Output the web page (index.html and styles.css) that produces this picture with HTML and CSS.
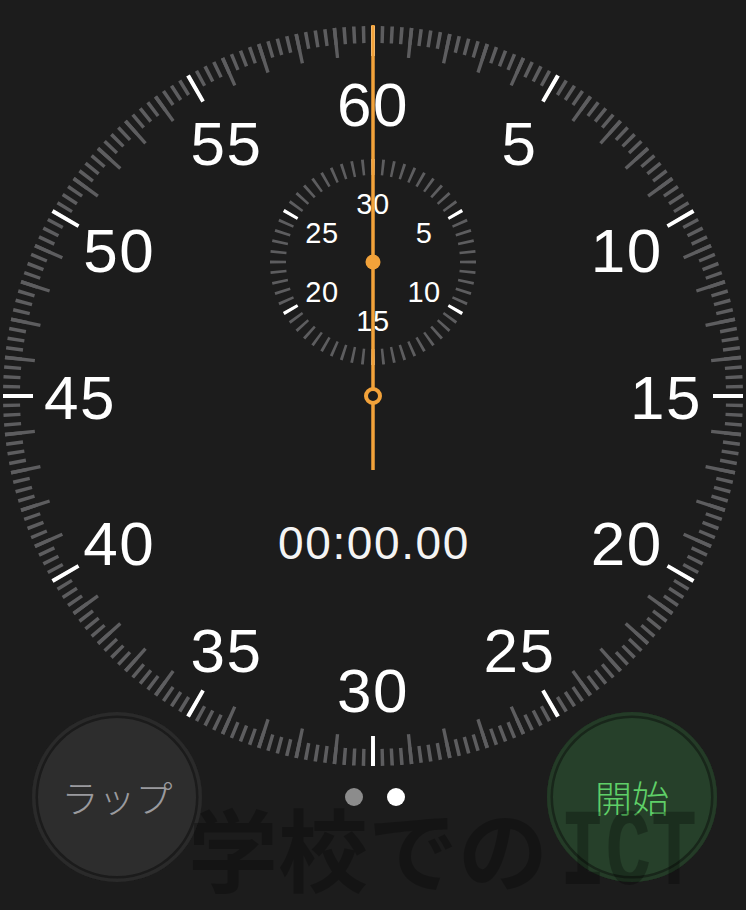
FILE: index.html
```html
<!DOCTYPE html>
<html lang="ja">
<head>
<meta charset="utf-8">
<title>ストップウォッチ</title>
<link rel="stylesheet" href="styles.css">
</head>
<body>
<div class="screen">
  <svg class="dial" viewBox="0 0 746 712" width="746" height="712">
    <g class="main-ticks" transform="rotate(-90 373 396)">
      <circle class="tick-ring minor" cx="373" cy="396" r="361.5" pathLength="240"/>
      <circle class="tick-ring second" cx="373" cy="396" r="355" pathLength="60"/>
      <circle class="tick-ring major" cx="373" cy="396" r="355" pathLength="12"/>
    </g>
    <g class="main-nums">
      <text class="num" x="373" y="104">60</text>
      <text class="num" x="519.5" y="143">5</text>
      <text class="num" x="626.7" y="250">10</text>
      <text class="num" x="666" y="397">15</text>
      <text class="num" x="626.7" y="543">20</text>
      <text class="num" x="519.5" y="650">25</text>
      <text class="num" x="373" y="690">30</text>
      <text class="num" x="226.5" y="650">35</text>
      <text class="num" x="119.3" y="543">40</text>
      <text class="num" x="80" y="397">45</text>
      <text class="num" x="119.3" y="250">50</text>
      <text class="num" x="226.5" y="143">55</text>
    </g>
    <g class="sub-ticks" transform="rotate(-90 373 262)">
      <circle class="tick-ring sub-minor" cx="373" cy="262" r="95" pathLength="60"/>
      <circle class="tick-ring sub-major" cx="373" cy="262" r="95" pathLength="6"/>
    </g>
    <g class="sub-nums">
      <text class="sub-num" x="373" y="204">30</text>
      <text class="sub-num" x="424.1" y="233">5</text>
      <text class="sub-num" x="424.1" y="292">10</text>
      <text class="sub-num" x="373" y="321">15</text>
      <text class="sub-num" x="321.9" y="292">20</text>
      <text class="sub-num" x="321.9" y="233">25</text>
    </g>
    <text class="time" x="374" y="543">00:00.00</text>
    <g class="hands">
      <line class="hand" x1="373" y1="25" x2="373" y2="470"/>
      <circle class="sub-hub" cx="373" cy="262" r="7.5"/>
      <circle class="main-hub" cx="373" cy="396" r="7"/>
    </g>
  </svg>
  <div class="controls">
    <button class="btn lap">ラップ</button>
    <div class="pager">
      <span class="dot"></span>
      <span class="dot active"></span>
    </div>
    <button class="btn start">開始</button>
  </div>
  <div class="watermark">学校での<span class="ict">ICT</span></div>
</div>
</body>
</html>
```
FILE: styles.css
```css
html, body {
  margin: 0;
  padding: 0;
  background: #1c1c1c;
}

.screen {
  position: relative;
  width: 746px;
  height: 910px;
  overflow: hidden;
  background: #1c1c1c;
}

.dial {
  display: block;
  overflow: visible;
}

.tick-ring {
  fill: none;
}

.minor {
  stroke: #5d5d5f;
  stroke-width: 17;
  stroke-dasharray: 0.37 0.63;
  stroke-dashoffset: 0.185;
}

.second {
  stroke: #5d5d5f;
  stroke-width: 30;
  stroke-dasharray: 0.094 0.906;
  stroke-dashoffset: 0.047;
}

.major {
  stroke: #ffffff;
  stroke-width: 30;
  stroke-dasharray: 0.0215 0.9785;
  stroke-dashoffset: 0.01075;
}

.sub-minor {
  stroke: #5d5d5f;
  stroke-width: 16;
  stroke-dasharray: 0.27 0.73;
  stroke-dashoffset: 0.135;
}

.sub-major {
  stroke: #ffffff;
  stroke-width: 16;
  stroke-dasharray: 0.031 0.969;
  stroke-dashoffset: 0.0155;
}

.num {
  font-family: "Liberation Sans", Arial, sans-serif;
  font-size: 62px;
  letter-spacing: 1.5px;
  fill: #ffffff;
  text-anchor: middle;
  dominant-baseline: central;
}

.sub-num {
  font-family: "Liberation Sans", Arial, sans-serif;
  font-size: 29px;
  letter-spacing: 0.5px;
  fill: #ffffff;
  text-anchor: middle;
  dominant-baseline: central;
}

.time {
  font-family: "Liberation Sans", Arial, sans-serif;
  font-size: 46px;
  letter-spacing: 1.6px;
  fill: #f4f4f4;
  text-anchor: middle;
  dominant-baseline: central;
}

.hand {
  stroke: #f2a23a;
  stroke-width: 3.5;
}

.sub-hub {
  fill: #f2a23a;
}

.main-hub {
  fill: #1c1c1c;
  stroke: #f2a23a;
  stroke-width: 4;
}

.controls {
  display: flex;
  align-items: center;
  justify-content: space-between;
  height: 170px;
  padding: 0 29px 0 32px;
}

.btn {
  width: 170px;
  height: 170px;
  border: none;
  padding: 0;
  margin: 0;
  border-radius: 50%;
  display: flex;
  align-items: center;
  justify-content: center;
  font-family: "Noto Sans CJK JP", sans-serif;
  font-size: 37px;
  font-weight: 300;
}

.lap {
  background: #2d2d2d;
  color: #9a9a9e;
  box-shadow: inset 0 0 0 3.5px #2a2a2a, inset 0 0 0 6px #1b1b1b;
}

.start {
  background: #26402a;
  color: #5fcf68;
  box-shadow: inset 0 0 0 3.5px #243b27, inset 0 0 0 6px #18261a;
}

.pager {
  display: flex;
  gap: 24px;
}

.dot {
  width: 18px;
  height: 18px;
  border-radius: 50%;
  background: #8c8c8c;
}

.dot.active {
  background: #ffffff;
}

.watermark {
  position: absolute;
  left: 188px;
  top: 801px;
  font-family: "Noto Sans CJK JP", sans-serif;
  font-weight: 700;
  font-size: 90px;
  line-height: 1;
  white-space: nowrap;
  color: rgba(0, 0, 0, 0.27);
  pointer-events: none;
}

.ict {
  display: inline-block;
  font-family: "Liberation Mono", "Courier New", monospace;
  font-size: 76px;
  font-weight: 700;
  transform: scaleY(1.45);
  transform-origin: 50% 80%;
  margin-left: 12px;
}
```
